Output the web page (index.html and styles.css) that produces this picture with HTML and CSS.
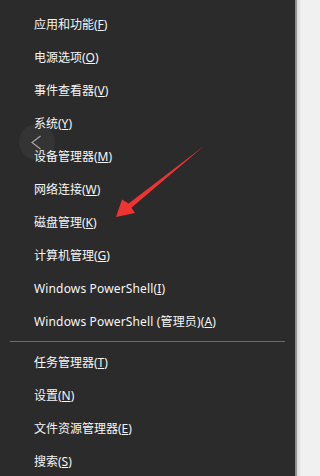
FILE: index.html
```html
<!DOCTYPE html>
<html lang="zh-CN">
<head>
<meta charset="utf-8">
<title>Win+X</title>
<link rel="stylesheet" href="styles.css">
</head>
<body>
<div class="screen">
  <nav class="menu">
    <ul class="group">
      <li class="item">应用和功能(<u>F</u>)</li>
      <li class="item">电源选项(<u>O</u>)</li>
      <li class="item">事件查看器(<u>V</u>)</li>
      <li class="item">系统(<u>Y</u>)</li>
      <li class="item">设备管理器(<u>M</u>)</li>
      <li class="item">网络连接(<u>W</u>)</li>
      <li class="item">磁盘管理(<u>K</u>)</li>
      <li class="item">计算机管理(<u>G</u>)</li>
      <li class="item latin">Windows PowerShell(<u>I</u>)</li>
      <li class="item latin">Windows PowerShell (管理员)(<u>A</u>)</li>
    </ul>
    <hr class="sep">
    <ul class="group">
      <li class="item">任务管理器(<u>T</u>)</li>
      <li class="item">设置(<u>N</u>)</li>
      <li class="item">文件资源管理器(<u>E</u>)</li>
      <li class="item">搜索(<u>S</u>)</li>
    </ul>
  </nav>
  <div class="edge"></div>
  <div class="back">
    <svg width="36" height="36" viewBox="0 0 36 36"><polyline points="21.5,12 13,18.5 21.5,25" fill="none" stroke="#a8a8a8" stroke-width="1.1"/></svg>
  </div>
  <svg class="arrow" width="301" height="476" viewBox="0 0 301 476">
    <polygon points="204,146 128.6,203.6 122,199.5 116,217 135,213 131.4,207.8" fill="#ee3333"/>
  </svg>
</div>
</body>
</html>
```

FILE: styles.css
```css
html, body {
  margin: 0;
  padding: 0;
  background: #f0f0f0;
}
.screen {
  position: relative;
  width: 301px;
  height: 476px;
  overflow: hidden;
  display: flex;
}
.menu {
  width: 295px;
  height: 476px;
  background: #2b2b2b;
  padding-top: 8px;
  box-sizing: border-box;
  font-family: "Noto Sans", "Noto Sans CJK SC", sans-serif;
  font-size: 12px;
  color: #f6f6f6;
}
.group {
  list-style: none;
  margin: 0;
  padding: 0;
}
.item {
  height: 33px;
  line-height: 33px;
  padding-left: 34px;
  white-space: nowrap;
}
.item.latin {
  letter-spacing: 0.15px;
}
.item u {
  text-decoration: underline;
  text-underline-offset: 1px;
}
.sep {
  margin: 3px 10px 4px 10px;
  border: 0;
  height: 1px;
  background: #6b6b6b;
}
.edge {
  width: 6px;
  height: 476px;
  background: linear-gradient(to right, #8a8a8a 0, #9a9a9a 2px, #dadada 2px, #ececec 6px);
}
.back {
  position: absolute;
  left: 19px;
  top: 124px;
  width: 36px;
  height: 36px;
  border-radius: 50%;
  background: rgba(255,255,255,0.045);
}
.back svg {
  display: block;
}
.arrow {
  position: absolute;
  left: 0;
  top: 0;
  pointer-events: none;
}
```
